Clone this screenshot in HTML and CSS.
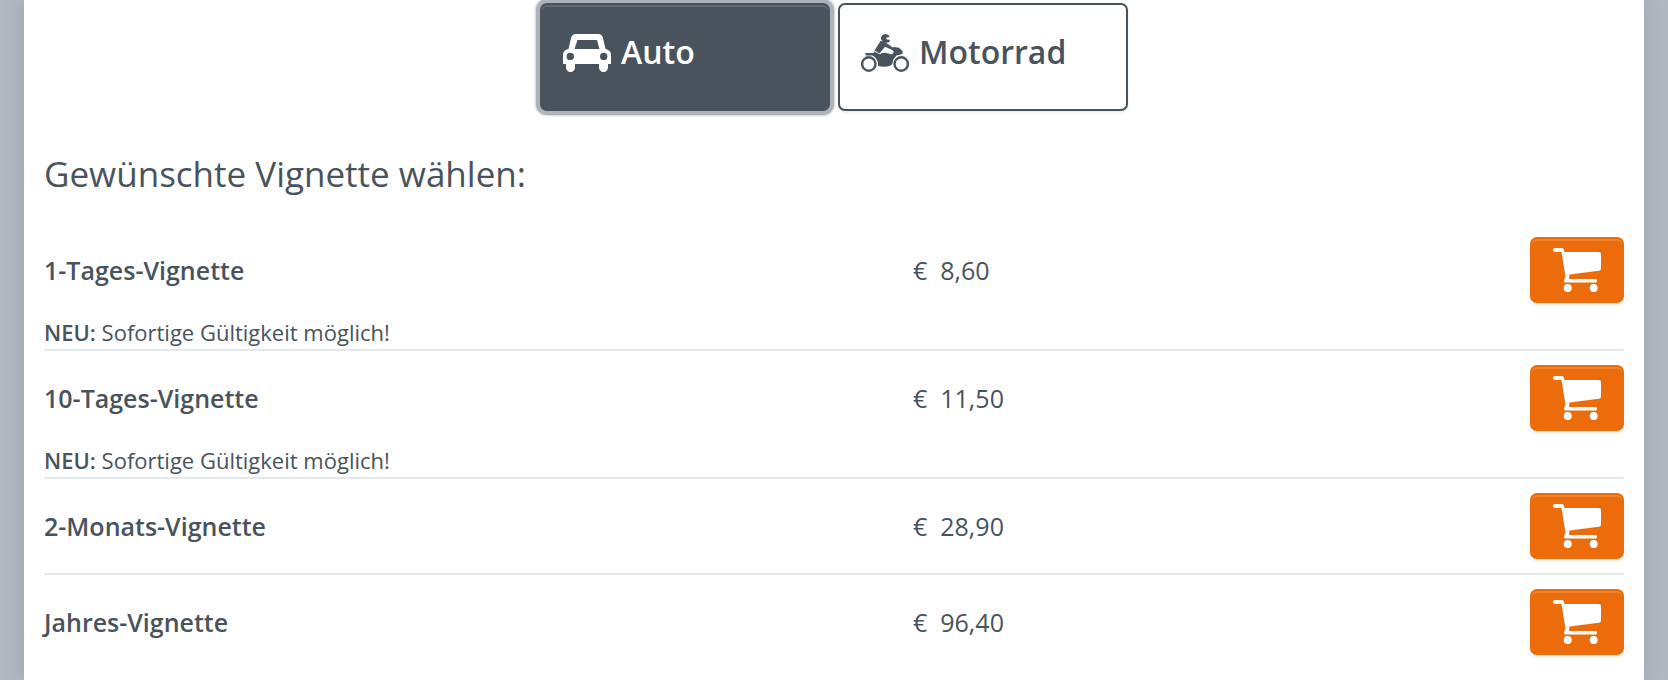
FILE: index.html
```html
<!DOCTYPE html>
<html lang="de">
<head>
  <meta charset="UTF-8">
  <meta name="viewport" content="width=device-width, initial-scale=1.0">
  <title>Vignette wählen</title>
  <link rel="stylesheet" href="styles.css">
</head>
<body>
  <!-- Shared icon, used once per row -->
  <svg class="sprite" aria-hidden="true">
    <symbol id="icon-cart" viewBox="0 0 48 44">
      <path d="M2 0h7q1.500 0 2 2l.5 2H46q2 0 2 2v14.500q0 2-2 2.200L16.500 26.500 16 31h26.500a1.700 1.700 0 0 1 0 3.500H12q-1.500 0-1-2l1.500-4L8.500 4H2a2 2 0 0 1 0-4z"/>
      <circle cx="14.700" cy="40" r="4"/>
      <circle cx="40.700" cy="40" r="4"/>
    </symbol>
  </svg>

  <main class="panel">
    <div class="vehicles">
      <button type="button" class="vehicle active" aria-pressed="true">
        <svg class="vehicle-icon" viewBox="0 -2 48 40" aria-hidden="true">
          <path fill-rule="evenodd" d="M13 0h22q4 0 5 4l2.500 11Q48 16 48 21v9h-3v3.500a4.500 4.500 0 0 1-9 0V30H12v3.500a4.500 4.500 0 0 1-9 0V30H0v-9q0-5 5.500-6L8 4q1-4 5-4zM14.500 6 11.500 15h25L34 6zM7.300 18.700a3.700 3.700 0 1 0 0 7.400 3.700 3.700 0 0 0 0-7.400zM40.700 18.700a3.700 3.700 0 1 0 0 7.400 3.700 3.700 0 0 0 0-7.400z"/>
        </svg>
        Auto
      </button>
      <button type="button" class="vehicle" aria-pressed="false">
        <svg class="vehicle-icon" viewBox="0 -2 48 40" aria-hidden="true">
          <circle class="wheel" cx="7.800" cy="30" r="6.700"/>
          <circle class="wheel" cx="40.200" cy="30" r="6.700"/>
          <path d="M28.800 3 25.500 3.600q-1 1.200.5 2l3 .3-.8 2.300q-3.500 1.200-6.500-.8-2.500-2-1.500-4.600Q21.500-.2 24.800 0q3 .3 4 3z"/>
          <path d="M19.500 7q2.500-.3 5.500 1.800l7.500 5.200-1 2-7.500-3.200-5.500 6.700-5-3z"/>
          <path d="M5 19h7.500l.6-1.600 6 3.100 1.500-1.500h5l5.400 1.600 2-2.600-3-3.500 3-1.500 5 .8 3.500 3.200v3l-6 1.500q-3.500 3-4 8l-2 2.300q-6.500 1.800-12.500.2v-2q0-5-5.500-8.500H5q-1.500-2 0-3z"/>
        </svg>
        Motorrad
      </button>
    </div>

    <h2>Gewünschte Vignette wählen:</h2>

    <table class="vignettes">
      <tbody>
        <tr>
          <th scope="row">1-Tages-Vignette</th>
          <td>€&nbsp; 8,60</td>
          <td class="action">
            <button type="button" class="cart" aria-label="1-Tages-Vignette in den Warenkorb"><svg><use href="#icon-cart"/></svg></button>
          </td>
        </tr>
        <tr class="note">
          <td colspan="3"><strong>NEU:</strong> Sofortige Gültigkeit möglich!</td>
        </tr>
      </tbody>
      <tbody>
        <tr>
          <th scope="row">10-Tages-Vignette</th>
          <td>€&nbsp; 11,50</td>
          <td class="action">
            <button type="button" class="cart" aria-label="10-Tages-Vignette in den Warenkorb"><svg><use href="#icon-cart"/></svg></button>
          </td>
        </tr>
        <tr class="note">
          <td colspan="3"><strong>NEU:</strong> Sofortige Gültigkeit möglich!</td>
        </tr>
      </tbody>
      <tbody>
        <tr>
          <th scope="row">2-Monats-Vignette</th>
          <td>€&nbsp; 28,90</td>
          <td class="action">
            <button type="button" class="cart" aria-label="2-Monats-Vignette in den Warenkorb"><svg><use href="#icon-cart"/></svg></button>
          </td>
        </tr>
      </tbody>
      <tbody>
        <tr>
          <th scope="row">Jahres-Vignette</th>
          <td>€&nbsp; 96,40</td>
          <td class="action">
            <button type="button" class="cart" aria-label="Jahres-Vignette in den Warenkorb"><svg><use href="#icon-cart"/></svg></button>
          </td>
        </tr>
      </tbody>
    </table>
  </main>
</body>
</html>
```
FILE: styles.css
```css
* {
  box-sizing: border-box;
}
body {
  margin: 0;
  padding: 0 24px;
  background-color: #b0b8c2;
  color: #49535d;
  font-family: "Open Sans", sans-serif;
  font-size: 25px;
}
.sprite {
  display: none;
}
.panel {
  min-height: 100vh;
  padding: 3px 20px 11px;
  background-color: #fff;
  box-shadow: 0 0 20px rgba(73, 83, 93, 0.2);
}

/* Vehicle switch */
.vehicles {
  display: flex;
  justify-content: center;
  gap: 8px;
}
.vehicle {
  display: flex;
  align-items: center;
  gap: 10px;
  width: 290px;
  padding: 25px 21px 35px;
  border: 2px solid #49535d;
  border-radius: 7px;
  background-color: #fff;
  box-shadow: 0 2px 3px rgba(0, 0, 0, 0.08);
  color: #49535d;
  font-family: inherit;
  font-size: 32px;
  font-weight: 600;
  line-height: 44px;
  cursor: pointer;
}
.vehicle.active {
  background-color: #49535d;
  box-shadow: inset 0 2px 0 rgba(255, 255, 255, 0.15), 0 0 0 4px #adb3b8, 0 0 2px 5px rgba(73, 83, 93, 0.25);
  color: #fff;
}
.vehicle-icon {
  width: 48px;
  height: 40px;
  fill: currentColor;
}
.wheel {
  fill: none;
  stroke: currentColor;
  stroke-width: 2.4;
}

h2 {
  margin: 39px 0 25px;
  font-size: 35px;
  font-weight: 400;
  line-height: 48px;
}

/* Price list */
.vignettes {
  width: 100%;
  border-collapse: collapse;
  table-layout: fixed;
}
.vignettes tbody {
  border-bottom: 2px solid #e4e9ed;
}
.vignettes tbody:last-child {
  border-bottom: none;
}
.vignettes th,
.vignettes td {
  padding: 14px 0;
  line-height: 36px;
  text-align: left;
  vertical-align: middle;
}
.vignettes th {
  width: 55%;
  font-weight: 600;
}
.vignettes .action {
  text-align: right;
}
.vignettes .note td {
  padding: 0 0 2px;
  font-size: 22px;
  line-height: 30px;
}
.note strong {
  font-weight: 600;
}
.cart {
  display: inline-block;
  padding: 9px 21px;
  border: 2px solid #ec6b0a;
  border-radius: 7px;
  background-color: #ec6b0a;
  box-shadow: inset 0 2px 0 rgba(255, 255, 255, 0.15), 0 2px 3px rgba(0, 0, 0, 0.08);
  vertical-align: top;
  cursor: pointer;
}
.cart svg {
  display: block;
  width: 48px;
  height: 44px;
  fill: #fff;
}
```
